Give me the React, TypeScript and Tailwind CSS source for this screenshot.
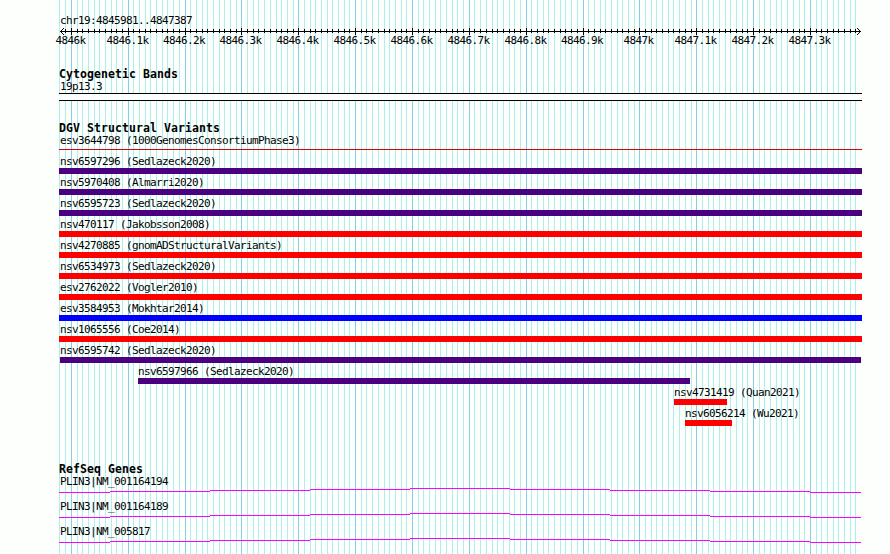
import React from "react";

const LEFT = 59;
const RIGHT = 862;

// Pixel column of the nth 10bp grid line, counted from 4846k
const gridX = (n: number) => Math.round(70.85 + 5.685 * n);

const gridLines = Array.from({ length: 141 }, (_, i) => i - 2);

const rulerLabels = [
  "4846k",
  "4846.1k",
  "4846.2k",
  "4846.3k",
  "4846.4k",
  "4846.5k",
  "4846.6k",
  "4846.7k",
  "4846.8k",
  "4846.9k",
  "4847k",
  "4847.1k",
  "4847.2k",
  "4847.3k",
];

interface Variant {
  name: string;
  color: string;
  start?: number;
  end?: number;
  thin?: boolean;
}

const GAIN_LOSS = "bg-[#4b0082]";
const LOSS = "bg-[#ff0000]";
const GAIN = "bg-[#0000ff]";

const variants: Variant[] = [
  { name: "esv3644798 (1000GenomesConsortiumPhase3)", color: "bg-[#dd0000]", thin: true },
  { name: "nsv6597296 (Sedlazeck2020)", color: GAIN_LOSS },
  { name: "nsv5970408 (Almarri2020)", color: GAIN_LOSS },
  { name: "nsv6595723 (Sedlazeck2020)", color: GAIN_LOSS },
  { name: "nsv470117 (Jakobsson2008)", color: LOSS },
  { name: "nsv4270885 (gnomADStructuralVariants)", color: LOSS },
  { name: "nsv6534973 (Sedlazeck2020)", color: LOSS },
  { name: "esv2762022 (Vogler2010)", color: LOSS },
  { name: "esv3584953 (Mokhtar2014)", color: GAIN },
  { name: "nsv1065556 (Coe2014)", color: LOSS },
  { name: "nsv6595742 (Sedlazeck2020)", color: GAIN_LOSS, start: 60, end: 861 },
  { name: "nsv6597966 (Sedlazeck2020)", color: GAIN_LOSS, start: 138, end: 690 },
  { name: "nsv4731419 (Quan2021)", color: LOSS, start: 674, end: 727 },
  { name: "nsv6056214 (Wu2021)", color: LOSS, start: 685, end: 732 },
];

const genes = ["PLIN3|NM_001164194", "PLIN3|NM_001164189", "PLIN3|NM_005817"];

// Intron line, drawn as a shallow stepped arch: [from, to, y]
const intron = [
  [59, 110, 4],
  [110, 210, 3],
  [210, 310, 2],
  [310, 410, 1],
  [410, 510, 0],
  [510, 610, 1],
  [610, 710, 2],
  [710, 810, 3],
  [810, 861, 4],
];

const Grid = () => (
  <svg
    className="absolute inset-0"
    width="890"
    height="554"
    shapeRendering="crispEdges"
    aria-hidden="true"
  >
    {gridLines.map((n) => (
      <rect
        key={n}
        x={gridX(n)}
        y={0}
        width={1}
        height={554}
        fill={n % 10 === 0 ? "#87ceeb" : "#afeeee"}
      />
    ))}
  </svg>
);

const Ruler = () => (
  <svg className="block" width="890" height="9" shapeRendering="crispEdges">
    <rect x={60} y={4} width={801} height={1} />
    {gridLines.slice(1).map((n) =>
      n % 10 === 0 ? (
        <rect key={n} x={gridX(n)} y={1} width={1} height={7} />
      ) : (
        <rect key={n} x={gridX(n)} y={2} width={1} height={4} />
      )
    )}
    {[1, 2, 3].map((d) => (
      <g key={d}>
        <rect x={60 + d} y={4 - d} width={1} height={1} />
        <rect x={60 + d} y={4 + d} width={1} height={1} />
        <rect x={860 - d} y={4 - d} width={1} height={1} />
        <rect x={860 - d} y={4 + d} width={1} height={1} />
      </g>
    ))}
  </svg>
);

const TrackTitle = ({ children }: { children: React.ReactNode }) => (
  <h2 className="h-3 pl-[59px] text-[11.5px] leading-[12px] font-bold tracking-[0.077px]">
    {children}
  </h2>
);

const VariantRow = ({ name, color, start = LEFT, end = RIGHT, thin }: Variant) => (
  <div className="h-[21px]" style={{ paddingLeft: start }}>
    <div className={`h-[13px] leading-[14px] ${start === LEFT ? "pl-px" : ""}`}>{name}</div>
    <div
      className={`${thin ? "mt-0.5 h-px" : "h-1.5"} ${color}`}
      style={{ width: end - start }}
    />
  </div>
);

const GeneRow = ({ name }: { name: string }) => (
  <div className="h-[25px]">
    <div className="h-[13px] pl-[60px] leading-[14px]">{name}</div>
    <svg className="block" width="890" height="5" shapeRendering="crispEdges">
      {intron.map(([from, to, y]) => (
        <rect key={from} x={from} y={y} width={to - from} height={1} fill="#ff00ff" />
      ))}
    </svg>
  </div>
);

export default function App() {
  return (
    <div className="relative h-[554px] w-[890px] overflow-hidden bg-[#fdfffc] font-['DejaVu_Sans_Mono','Liberation_Mono',monospace] text-[11px] tracking-[-0.622px] whitespace-pre text-black">
      <Grid />
      <main className="relative flex flex-col pt-[15px]">
        <header className="h-[53px]">
          <div className="h-3 pl-[60px] leading-[12px]">chr19:4845981..4847387</div>
          <Ruler />
          <div className="-mt-px flex h-3 pl-[42px] leading-[12px]">
            {rulerLabels.map((label, i) => (
              <span
                key={label}
                className="shrink-0 text-center"
                style={{ width: gridX(i * 10 + 10) - gridX(i * 10) }}
              >
                {label}
              </span>
            ))}
          </div>
        </header>

        <section className="h-[54px]">
          <TrackTitle>Cytogenetic Bands</TrackTitle>
          <div className="h-[13px] pl-[60px] leading-[14px]">19p13.3</div>
          <div className="ml-[59px] h-2 w-[803px] border-y border-black bg-[#fdfffc]" />
        </section>

        <section className="h-[341px]">
          <TrackTitle>DGV Structural Variants</TrackTitle>
          {variants.map((variant) => (
            <VariantRow key={variant.name} {...variant} />
          ))}
        </section>

        <section>
          <TrackTitle>RefSeq Genes</TrackTitle>
          {genes.map((gene) => (
            <GeneRow key={gene} name={gene} />
          ))}
        </section>
      </main>
    </div>
  );
}
